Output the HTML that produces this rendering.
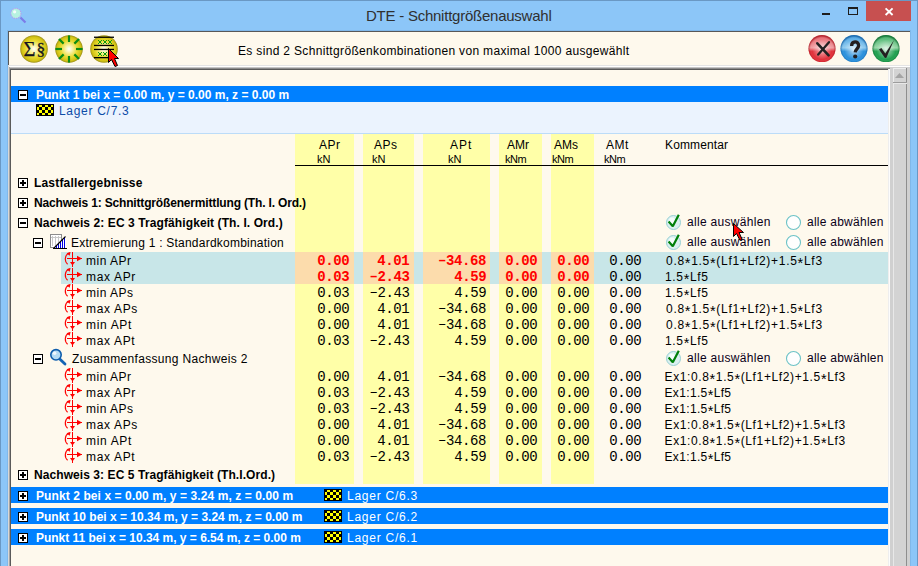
<!DOCTYPE html>
<html><head><meta charset="utf-8"><title>DTE - Schnittgrößenauswahl</title><style>
html,body{margin:0;padding:0;width:918px;height:566px;overflow:hidden;background:#8cc6f8}
.r{position:absolute;display:block}
.t{position:absolute;white-space:pre;line-height:1}
.a{position:relative;top:2.5px;font-size:14.5px}
.d{position:relative;top:-1.5px}
</style></head><body>
<div class="r" style="left:0px;top:0px;width:918px;height:566px;background:#8cc6f8;"></div>
<div class="r" style="left:0px;top:0px;width:918px;height:1px;background:#6a98c4;"></div>
<div class="r" style="left:0px;top:0px;width:1px;height:566px;background:#6a98c4;"></div>
<div class="r" style="left:917px;top:0px;width:1px;height:566px;background:#6a98c4;"></div>
<div class="t" style="left:366.00px;top:8.00px;font-family:'Liberation Sans';font-size:15px;font-weight:normal;color:#303030;letter-spacing:-0.240px">DTE - Schnittgrößenauswahl</div>
<div class="r" style="left:866px;top:1px;width:45px;height:20px;background:#c75050;"></div>
<svg class="r" style="left:866px;top:1px;" width="45" height="20" viewBox="0 0 45 20"><path d="M19.6 7.4 L26.6 14 M26.6 7.4 L19.6 14" stroke="#fff" stroke-width="1.9"/></svg>
<svg class="r" style="left:840px;top:1px;" width="26" height="20" viewBox="0 0 26 20"><g shape-rendering="crispEdges"><rect x="8" y="6" width="10" height="2" fill="#1e1e1e"/><rect x="8" y="6" width="1" height="8" fill="#1e1e1e"/><rect x="17" y="6" width="1" height="8" fill="#1e1e1e"/><rect x="8" y="13" width="10" height="1" fill="#1e1e1e"/></g></svg>
<svg class="r" style="left:815px;top:1px;" width="26" height="20" viewBox="0 0 26 20"><rect x="7" y="12" width="8" height="2" fill="#1e1e1e" shape-rendering="crispEdges"/></svg>
<svg class="r" style="left:8px;top:6px;" width="20" height="20" viewBox="0 0 20 20"><line x1="12.5" y1="11.5" x2="17.5" y2="16.5" stroke="#7c7ce8" stroke-width="2.2"/><circle cx="7.9" cy="7.4" r="5.1" fill="#b6f2e0" stroke="#b49cf0" stroke-width="1.1" stroke-dasharray="1.3 0.9"/><circle cx="6.6" cy="5.8" r="1.6" fill="#fff" opacity="0.85"/></svg>
<div class="r" style="left:7px;top:30px;width:904px;height:536px;background:#80b8ea;"></div>
<div class="r" style="left:8px;top:31px;width:902px;height:535px;background:#fef9ed;"></div>
<div class="r" style="left:8px;top:31px;width:902px;height:1px;background:#585858;"></div>
<div class="r" style="left:8px;top:31px;width:1px;height:35px;background:#585858;"></div>
<div class="r" style="left:8px;top:65px;width:902px;height:1px;background:#e4e4e4;"></div>
<div class="r" style="left:8px;top:66px;width:902px;height:1px;background:#ffffff;"></div>
<div class="r" style="left:8px;top:67px;width:902px;height:1px;background:#c4c4c4;"></div>
<div class="r" style="left:8px;top:68px;width:902px;height:1px;background:#8c8c8c;"></div>
<div class="r" style="left:8px;top:66px;width:1px;height:500px;background:#d8d8d8;"></div>
<div class="r" style="left:9px;top:67px;width:1px;height:499px;background:#a4a4a4;"></div>
<div class="r" style="left:10px;top:69px;width:878px;height:1px;background:#5a5a5a;"></div>
<div class="r" style="left:10px;top:69px;width:1px;height:497px;background:#5a5a5a;"></div>
<div class="t" style="left:238.00px;top:45.00px;font-family:'Liberation Sans';font-size:12px;font-weight:normal;color:#000;letter-spacing:0.333px">Es sind 2 Schnittgrößenkombinationen von maximal 1000 ausgewählt</div>
<div class="r" style="left:888px;top:69px;width:1px;height:497px;background:#eeeeee;"></div>
<div class="r" style="left:889px;top:69px;width:1px;height:497px;background:#fcfcfc;"></div>
<div class="r" style="left:890px;top:67px;width:20px;height:499px;background:#d0d0d0;"></div>
<div class="r" style="left:893px;top:68px;width:1px;height:498px;background:#e8e8e8;"></div>
<div class="r" style="left:894px;top:68px;width:12px;height:498px;background:#d3d3d3;"></div>
<div class="r" style="left:906px;top:68px;width:1px;height:498px;background:#8e8e8e;"></div>
<svg class="r" style="left:893px;top:68px;" width="14" height="16" viewBox="0 0 14 16"><g shape-rendering="crispEdges"><rect x="0" y="0" width="14" height="16" fill="#d3d3d3"/><rect x="0" y="0" width="1" height="15" fill="#ececec"/><rect x="0" y="0" width="13" height="1" fill="#ececec"/><rect x="13" y="0" width="1" height="16" fill="#8e8e8e"/><rect x="0" y="14" width="14" height="1" fill="#9c9c9c"/><rect x="0" y="15" width="14" height="1" fill="#e8e8e8"/></g><path d="M2 10 L6.5 5 L11 10 Z" fill="#a4a4a4"/></svg>
<div class="r" style="left:11px;top:86px;width:877px;height:16px;background:#0080ff;"></div>
<div class="r" style="left:11px;top:102px;width:877px;height:31px;background:#ebf3fe;"></div>
<div class="r" style="left:11px;top:133px;width:877px;height:1px;background:#bcdcf8;"></div>
<svg class="r" style="left:18px;top:90px;" width="10" height="10" viewBox="0 0 10 10"><g shape-rendering="crispEdges"><rect x="0" y="0" width="10" height="10" fill="#000"/><rect x="1" y="1" width="8" height="8" fill="#fff"/><rect x="2" y="4" width="6" height="2" fill="#000"/></g></svg>
<div class="t" style="left:36.00px;top:89.00px;font-family:'Liberation Sans';font-size:12px;font-weight:bold;color:#fff;letter-spacing:0.000px">Punkt 1 bei x = 0.00 m, y = 0.00 m, z = 0.00 m</div>
<svg class="r" style="left:36px;top:104px;" width="18" height="12" viewBox="0 0 18 12"><g shape-rendering="crispEdges"><rect width="18" height="12" fill="#000"/><rect x="3" y="1" width="3" height="2" fill="#ffff00"/><rect x="9" y="1" width="3" height="2" fill="#ffff00"/><rect x="15" y="1" width="2" height="2" fill="#ffff00"/><rect x="1" y="3" width="2" height="3" fill="#ffff00"/><rect x="6" y="3" width="3" height="3" fill="#ffff00"/><rect x="12" y="3" width="3" height="3" fill="#ffff00"/><rect x="3" y="6" width="3" height="3" fill="#ffff00"/><rect x="9" y="6" width="3" height="3" fill="#ffff00"/><rect x="15" y="6" width="2" height="3" fill="#ffff00"/><rect x="1" y="9" width="2" height="2" fill="#ffff00"/><rect x="6" y="9" width="3" height="2" fill="#ffff00"/><rect x="12" y="9" width="3" height="2" fill="#ffff00"/></g></svg>
<div class="t" style="left:59.00px;top:105.00px;font-family:'Liberation Sans';font-size:12px;font-weight:normal;color:#0c4ca8;letter-spacing:0.700px">Lager C/7.3</div>
<div class="r" style="left:295px;top:134px;width:59px;height:350px;background:#ffffa8;"></div>
<div class="r" style="left:363px;top:134px;width:51px;height:350px;background:#ffffa8;"></div>
<div class="r" style="left:423px;top:134px;width:67px;height:350px;background:#ffffa8;"></div>
<div class="r" style="left:499px;top:134px;width:43px;height:350px;background:#ffffa8;"></div>
<div class="r" style="left:551px;top:134px;width:43px;height:350px;background:#ffffa8;"></div>
<div class="t" style="left:319.00px;top:139.00px;font-family:'Liberation Sans';font-size:12px;font-weight:normal;color:#000;letter-spacing:0.500px">APr</div>
<div class="t" style="left:317.00px;top:154.00px;font-family:'Liberation Sans';font-size:11px;font-weight:normal;color:#000;letter-spacing:0.000px">kN</div>
<div class="t" style="left:374.00px;top:139.00px;font-family:'Liberation Sans';font-size:12px;font-weight:normal;color:#000;letter-spacing:0.500px">APs</div>
<div class="t" style="left:372.00px;top:154.00px;font-family:'Liberation Sans';font-size:11px;font-weight:normal;color:#000;letter-spacing:0.000px">kN</div>
<div class="t" style="left:450.00px;top:139.00px;font-family:'Liberation Sans';font-size:12px;font-weight:normal;color:#000;letter-spacing:1.000px">APt</div>
<div class="t" style="left:448.00px;top:154.00px;font-family:'Liberation Sans';font-size:11px;font-weight:normal;color:#000;letter-spacing:0.000px">kN</div>
<div class="t" style="left:507.00px;top:139.00px;font-family:'Liberation Sans';font-size:12px;font-weight:normal;color:#000;letter-spacing:0.000px">AMr</div>
<div class="t" style="left:505.00px;top:154.00px;font-family:'Liberation Sans';font-size:11px;font-weight:normal;color:#000;letter-spacing:-0.500px">kNm</div>
<div class="t" style="left:554.00px;top:139.00px;font-family:'Liberation Sans';font-size:12px;font-weight:normal;color:#000;letter-spacing:0.000px">AMs</div>
<div class="t" style="left:552.00px;top:154.00px;font-family:'Liberation Sans';font-size:11px;font-weight:normal;color:#000;letter-spacing:-0.500px">kNm</div>
<div class="t" style="left:606.00px;top:139.00px;font-family:'Liberation Sans';font-size:12px;font-weight:normal;color:#000;letter-spacing:0.500px">AMt</div>
<div class="t" style="left:604.00px;top:154.00px;font-family:'Liberation Sans';font-size:11px;font-weight:normal;color:#000;letter-spacing:-0.500px">kNm</div>
<div class="t" style="left:665.00px;top:139.00px;font-family:'Liberation Sans';font-size:12px;font-weight:normal;color:#000;letter-spacing:0.125px">Kommentar</div>
<div class="r" style="left:295px;top:165px;width:593px;height:1px;background:#000;"></div>
<svg class="r" style="left:18px;top:178px;" width="10" height="10" viewBox="0 0 10 10"><g shape-rendering="crispEdges"><rect x="0" y="0" width="10" height="10" fill="#000"/><rect x="1" y="1" width="8" height="8" fill="#fff"/><rect x="2" y="4" width="6" height="2" fill="#000"/><rect x="4" y="2" width="2" height="6" fill="#000"/></g></svg>
<div class="t" style="left:34.00px;top:177.00px;font-family:'Liberation Sans';font-size:12px;font-weight:bold;color:#000;letter-spacing:0.176px">Lastfallergebnisse</div>
<svg class="r" style="left:18px;top:198px;" width="10" height="10" viewBox="0 0 10 10"><g shape-rendering="crispEdges"><rect x="0" y="0" width="10" height="10" fill="#000"/><rect x="1" y="1" width="8" height="8" fill="#fff"/><rect x="2" y="4" width="6" height="2" fill="#000"/><rect x="4" y="2" width="2" height="6" fill="#000"/></g></svg>
<div class="t" style="left:34.00px;top:197.00px;font-family:'Liberation Sans';font-size:12px;font-weight:bold;color:#000;letter-spacing:-0.167px">Nachweis 1: Schnittgrößenermittlung (Th. I. Ord.)</div>
<svg class="r" style="left:18px;top:218px;" width="10" height="10" viewBox="0 0 10 10"><g shape-rendering="crispEdges"><rect x="0" y="0" width="10" height="10" fill="#000"/><rect x="1" y="1" width="8" height="8" fill="#fff"/><rect x="2" y="4" width="6" height="2" fill="#000"/></g></svg>
<div class="t" style="left:34.00px;top:217.00px;font-family:'Liberation Sans';font-size:12px;font-weight:bold;color:#000;letter-spacing:0.093px">Nachweis 2: EC 3 Tragfähigkeit (Th. I. Ord.)</div>
<svg class="r" style="left:33px;top:238px;" width="10" height="10" viewBox="0 0 10 10"><g shape-rendering="crispEdges"><rect x="0" y="0" width="10" height="10" fill="#000"/><rect x="1" y="1" width="8" height="8" fill="#fff"/><rect x="2" y="4" width="6" height="2" fill="#000"/></g></svg>
<svg class="r" style="left:50px;top:234px;" width="17" height="15" viewBox="0 0 17 15"><g shape-rendering="crispEdges"><rect x="0" y="0" width="12" height="14" fill="#8c8c8c"/><rect x="1" y="1" width="10" height="12" fill="#fff"/><rect x="1" y="3" width="10" height="1" fill="#c8c8c8"/><rect x="2" y="2" width="1" height="10" fill="#c8c8c8"/><rect x="5" y="2" width="1" height="10" fill="#c8c8c8"/><rect x="8" y="2" width="1" height="10" fill="#c8c8c8"/></g><path d="M4 14 L16 2 L16 14 Z" fill="#fff"/><g stroke="#0000e0" stroke-width="1" shape-rendering="crispEdges"><line x1="6.5" y1="12" x2="6.5" y2="14"/><line x1="8.5" y1="10" x2="8.5" y2="14"/><line x1="10.5" y1="8" x2="10.5" y2="14"/><line x1="12.5" y1="6" x2="12.5" y2="14"/><line x1="14.5" y1="4" x2="14.5" y2="14"/></g><line x1="3.5" y1="14.5" x2="15.5" y2="2.5" stroke="#000" stroke-width="1.1"/><rect x="3" y="14" width="14" height="1" fill="#000"/></svg>
<div class="t" style="left:71.00px;top:237.00px;font-family:'Liberation Sans';font-size:12px;font-weight:normal;color:#000;letter-spacing:0.229px">Extremierung 1 : Standardkombination</div>
<div class="r" style="left:61px;top:252px;width:827px;height:32px;background:#c8e6e8;"></div>
<div class="r" style="left:295px;top:252px;width:59px;height:32px;background:#fcdcac;"></div>
<div class="r" style="left:363px;top:252px;width:51px;height:32px;background:#fcdcac;"></div>
<div class="r" style="left:423px;top:252px;width:67px;height:32px;background:#fcdcac;"></div>
<div class="r" style="left:499px;top:252px;width:43px;height:32px;background:#fcdcac;"></div>
<div class="r" style="left:551px;top:252px;width:43px;height:32px;background:#fcdcac;"></div>
<svg class="r" style="left:61px;top:252px;" width="22" height="16" viewBox="0 0 22 16"><g shape-rendering="crispEdges" fill="#ff0000"><rect x="11" y="0" width="1" height="15"/><rect x="6" y="6" width="15" height="1"/></g><path d="M9 10 L14 10 L11.5 13.6 Z" fill="#f00"/><path d="M16 3.8 L21 6.5 L16 9.2 Z" fill="#f00"/><path d="M7.6 1.2 A5.6 6.4 0 0 0 6.6 12.2" stroke="#f00" stroke-width="1.15" fill="none"/><path d="M5.6 1.2 L9.6 -0.2 L8.6 3.8 Z" fill="#f00"/></svg>
<div class="t" style="left:86.00px;top:255.00px;font-family:'Liberation Sans';font-size:12px;font-weight:normal;color:#000;letter-spacing:0.500px">min APr</div>
<div class="t" style="left:317.20px;top:254.00px;font-family:'Liberation Mono';font-size:14px;font-weight:bold;color:#ff0000;letter-spacing:-0.400px">0.00</div>
<div class="t" style="left:377.20px;top:254.00px;font-family:'Liberation Mono';font-size:14px;font-weight:bold;color:#ff0000;letter-spacing:-0.400px">4.01</div>
<div class="t" style="left:438.00px;top:254.00px;font-family:'Liberation Mono';font-size:14px;font-weight:bold;color:#ff0000;letter-spacing:-0.400px"><span class="d">–</span>34.68</div>
<div class="t" style="left:505.20px;top:254.00px;font-family:'Liberation Mono';font-size:14px;font-weight:bold;color:#ff0000;letter-spacing:-0.400px">0.00</div>
<div class="t" style="left:557.20px;top:254.00px;font-family:'Liberation Mono';font-size:14px;font-weight:bold;color:#ff0000;letter-spacing:-0.400px">0.00</div>
<div class="t" style="left:609.20px;top:254.00px;font-family:'Liberation Mono';font-size:14px;font-weight:normal;color:#000;letter-spacing:-0.400px">0.00</div>
<div class="t" style="left:666.00px;top:253.00px;font-family:'Liberation Sans';font-size:12px;font-weight:normal;color:#000;letter-spacing:0.708px">0.8<span class="a">*</span>1.5<span class="a">*</span>(Lf1+Lf2)+1.5<span class="a">*</span>Lf3</div>
<svg class="r" style="left:61px;top:268px;" width="22" height="16" viewBox="0 0 22 16"><g shape-rendering="crispEdges" fill="#ff0000"><rect x="11" y="0" width="1" height="15"/><rect x="6" y="6" width="15" height="1"/></g><path d="M9 10 L14 10 L11.5 13.6 Z" fill="#f00"/><path d="M16 3.8 L21 6.5 L16 9.2 Z" fill="#f00"/><path d="M7.6 1.2 A5.6 6.4 0 0 0 6.6 12.2" stroke="#f00" stroke-width="1.15" fill="none"/><path d="M5.6 1.2 L9.6 -0.2 L8.6 3.8 Z" fill="#f00"/></svg>
<div class="t" style="left:86.00px;top:271.00px;font-family:'Liberation Sans';font-size:12px;font-weight:normal;color:#000;letter-spacing:0.667px">max APr</div>
<div class="t" style="left:317.20px;top:270.00px;font-family:'Liberation Mono';font-size:14px;font-weight:bold;color:#ff0000;letter-spacing:-0.400px">0.03</div>
<div class="t" style="left:369.60px;top:270.00px;font-family:'Liberation Mono';font-size:14px;font-weight:bold;color:#ff0000;letter-spacing:-0.400px"><span class="d">–</span>2.43</div>
<div class="t" style="left:454.20px;top:270.00px;font-family:'Liberation Mono';font-size:14px;font-weight:bold;color:#ff0000;letter-spacing:-0.400px">4.59</div>
<div class="t" style="left:505.20px;top:270.00px;font-family:'Liberation Mono';font-size:14px;font-weight:bold;color:#ff0000;letter-spacing:-0.400px">0.00</div>
<div class="t" style="left:557.20px;top:270.00px;font-family:'Liberation Mono';font-size:14px;font-weight:bold;color:#ff0000;letter-spacing:-0.400px">0.00</div>
<div class="t" style="left:609.20px;top:270.00px;font-family:'Liberation Mono';font-size:14px;font-weight:normal;color:#000;letter-spacing:-0.400px">0.00</div>
<div class="t" style="left:665.00px;top:269.00px;font-family:'Liberation Sans';font-size:12px;font-weight:normal;color:#000;letter-spacing:0.667px">1.5<span class="a">*</span>Lf5</div>
<svg class="r" style="left:61px;top:284px;" width="22" height="16" viewBox="0 0 22 16"><g shape-rendering="crispEdges" fill="#ff0000"><rect x="11" y="0" width="1" height="15"/><rect x="6" y="6" width="15" height="1"/></g><path d="M9 10 L14 10 L11.5 13.6 Z" fill="#f00"/><path d="M16 3.8 L21 6.5 L16 9.2 Z" fill="#f00"/><path d="M7.6 1.2 A5.6 6.4 0 0 0 6.6 12.2" stroke="#f00" stroke-width="1.15" fill="none"/><path d="M5.6 1.2 L9.6 -0.2 L8.6 3.8 Z" fill="#f00"/></svg>
<div class="t" style="left:86.00px;top:287.00px;font-family:'Liberation Sans';font-size:12px;font-weight:normal;color:#000;letter-spacing:0.500px">min APs</div>
<div class="t" style="left:317.20px;top:286.00px;font-family:'Liberation Mono';font-size:14px;font-weight:normal;color:#000;letter-spacing:-0.400px">0.03</div>
<div class="t" style="left:369.60px;top:286.00px;font-family:'Liberation Mono';font-size:14px;font-weight:normal;color:#000;letter-spacing:-0.400px"><span class="d">–</span>2.43</div>
<div class="t" style="left:454.20px;top:286.00px;font-family:'Liberation Mono';font-size:14px;font-weight:normal;color:#000;letter-spacing:-0.400px">4.59</div>
<div class="t" style="left:505.20px;top:286.00px;font-family:'Liberation Mono';font-size:14px;font-weight:normal;color:#000;letter-spacing:-0.400px">0.00</div>
<div class="t" style="left:557.20px;top:286.00px;font-family:'Liberation Mono';font-size:14px;font-weight:normal;color:#000;letter-spacing:-0.400px">0.00</div>
<div class="t" style="left:609.20px;top:286.00px;font-family:'Liberation Mono';font-size:14px;font-weight:normal;color:#000;letter-spacing:-0.400px">0.00</div>
<div class="t" style="left:665.00px;top:285.00px;font-family:'Liberation Sans';font-size:12px;font-weight:normal;color:#000;letter-spacing:0.667px">1.5<span class="a">*</span>Lf5</div>
<svg class="r" style="left:61px;top:300px;" width="22" height="16" viewBox="0 0 22 16"><g shape-rendering="crispEdges" fill="#ff0000"><rect x="11" y="0" width="1" height="15"/><rect x="6" y="6" width="15" height="1"/></g><path d="M9 10 L14 10 L11.5 13.6 Z" fill="#f00"/><path d="M16 3.8 L21 6.5 L16 9.2 Z" fill="#f00"/><path d="M7.6 1.2 A5.6 6.4 0 0 0 6.6 12.2" stroke="#f00" stroke-width="1.15" fill="none"/><path d="M5.6 1.2 L9.6 -0.2 L8.6 3.8 Z" fill="#f00"/></svg>
<div class="t" style="left:86.00px;top:303.00px;font-family:'Liberation Sans';font-size:12px;font-weight:normal;color:#000;letter-spacing:0.667px">max APs</div>
<div class="t" style="left:317.20px;top:302.00px;font-family:'Liberation Mono';font-size:14px;font-weight:normal;color:#000;letter-spacing:-0.400px">0.00</div>
<div class="t" style="left:377.20px;top:302.00px;font-family:'Liberation Mono';font-size:14px;font-weight:normal;color:#000;letter-spacing:-0.400px">4.01</div>
<div class="t" style="left:438.00px;top:302.00px;font-family:'Liberation Mono';font-size:14px;font-weight:normal;color:#000;letter-spacing:-0.400px"><span class="d">–</span>34.68</div>
<div class="t" style="left:505.20px;top:302.00px;font-family:'Liberation Mono';font-size:14px;font-weight:normal;color:#000;letter-spacing:-0.400px">0.00</div>
<div class="t" style="left:557.20px;top:302.00px;font-family:'Liberation Mono';font-size:14px;font-weight:normal;color:#000;letter-spacing:-0.400px">0.00</div>
<div class="t" style="left:609.20px;top:302.00px;font-family:'Liberation Mono';font-size:14px;font-weight:normal;color:#000;letter-spacing:-0.400px">0.00</div>
<div class="t" style="left:666.00px;top:301.00px;font-family:'Liberation Sans';font-size:12px;font-weight:normal;color:#000;letter-spacing:0.708px">0.8<span class="a">*</span>1.5<span class="a">*</span>(Lf1+Lf2)+1.5<span class="a">*</span>Lf3</div>
<svg class="r" style="left:61px;top:316px;" width="22" height="16" viewBox="0 0 22 16"><g shape-rendering="crispEdges" fill="#ff0000"><rect x="11" y="0" width="1" height="15"/><rect x="6" y="6" width="15" height="1"/></g><path d="M9 10 L14 10 L11.5 13.6 Z" fill="#f00"/><path d="M16 3.8 L21 6.5 L16 9.2 Z" fill="#f00"/><path d="M7.6 1.2 A5.6 6.4 0 0 0 6.6 12.2" stroke="#f00" stroke-width="1.15" fill="none"/><path d="M5.6 1.2 L9.6 -0.2 L8.6 3.8 Z" fill="#f00"/></svg>
<div class="t" style="left:86.00px;top:319.00px;font-family:'Liberation Sans';font-size:12px;font-weight:normal;color:#000;letter-spacing:0.667px">min APt</div>
<div class="t" style="left:317.20px;top:318.00px;font-family:'Liberation Mono';font-size:14px;font-weight:normal;color:#000;letter-spacing:-0.400px">0.00</div>
<div class="t" style="left:377.20px;top:318.00px;font-family:'Liberation Mono';font-size:14px;font-weight:normal;color:#000;letter-spacing:-0.400px">4.01</div>
<div class="t" style="left:438.00px;top:318.00px;font-family:'Liberation Mono';font-size:14px;font-weight:normal;color:#000;letter-spacing:-0.400px"><span class="d">–</span>34.68</div>
<div class="t" style="left:505.20px;top:318.00px;font-family:'Liberation Mono';font-size:14px;font-weight:normal;color:#000;letter-spacing:-0.400px">0.00</div>
<div class="t" style="left:557.20px;top:318.00px;font-family:'Liberation Mono';font-size:14px;font-weight:normal;color:#000;letter-spacing:-0.400px">0.00</div>
<div class="t" style="left:609.20px;top:318.00px;font-family:'Liberation Mono';font-size:14px;font-weight:normal;color:#000;letter-spacing:-0.400px">0.00</div>
<div class="t" style="left:666.00px;top:317.00px;font-family:'Liberation Sans';font-size:12px;font-weight:normal;color:#000;letter-spacing:0.708px">0.8<span class="a">*</span>1.5<span class="a">*</span>(Lf1+Lf2)+1.5<span class="a">*</span>Lf3</div>
<svg class="r" style="left:61px;top:332px;" width="22" height="16" viewBox="0 0 22 16"><g shape-rendering="crispEdges" fill="#ff0000"><rect x="11" y="0" width="1" height="15"/><rect x="6" y="6" width="15" height="1"/></g><path d="M9 10 L14 10 L11.5 13.6 Z" fill="#f00"/><path d="M16 3.8 L21 6.5 L16 9.2 Z" fill="#f00"/><path d="M7.6 1.2 A5.6 6.4 0 0 0 6.6 12.2" stroke="#f00" stroke-width="1.15" fill="none"/><path d="M5.6 1.2 L9.6 -0.2 L8.6 3.8 Z" fill="#f00"/></svg>
<div class="t" style="left:86.00px;top:335.00px;font-family:'Liberation Sans';font-size:12px;font-weight:normal;color:#000;letter-spacing:0.667px">max APt</div>
<div class="t" style="left:317.20px;top:334.00px;font-family:'Liberation Mono';font-size:14px;font-weight:normal;color:#000;letter-spacing:-0.400px">0.03</div>
<div class="t" style="left:369.60px;top:334.00px;font-family:'Liberation Mono';font-size:14px;font-weight:normal;color:#000;letter-spacing:-0.400px"><span class="d">–</span>2.43</div>
<div class="t" style="left:454.20px;top:334.00px;font-family:'Liberation Mono';font-size:14px;font-weight:normal;color:#000;letter-spacing:-0.400px">4.59</div>
<div class="t" style="left:505.20px;top:334.00px;font-family:'Liberation Mono';font-size:14px;font-weight:normal;color:#000;letter-spacing:-0.400px">0.00</div>
<div class="t" style="left:557.20px;top:334.00px;font-family:'Liberation Mono';font-size:14px;font-weight:normal;color:#000;letter-spacing:-0.400px">0.00</div>
<div class="t" style="left:609.20px;top:334.00px;font-family:'Liberation Mono';font-size:14px;font-weight:normal;color:#000;letter-spacing:-0.400px">0.00</div>
<div class="t" style="left:665.00px;top:333.00px;font-family:'Liberation Sans';font-size:12px;font-weight:normal;color:#000;letter-spacing:0.667px">1.5<span class="a">*</span>Lf5</div>
<svg class="r" style="left:665px;top:214px;" width="18" height="17" viewBox="0 0 18 17"><circle cx="8.5" cy="8.5" r="7" fill="#daf0f0" stroke="#98d0d4" stroke-width="1"/><circle cx="7" cy="6.5" r="3" fill="#f4fcfc"/><path d="M3.6 7.6 L7.8 12.3 L13.8 0.8" stroke="#00800a" stroke-width="2.2" fill="none" stroke-linejoin="bevel"/></svg>
<div class="t" style="left:687.00px;top:216.00px;font-family:'Liberation Sans';font-size:12px;font-weight:normal;color:#0a0018;letter-spacing:0.308px">alle auswählen</div>
<svg class="r" style="left:785px;top:214px;" width="17" height="17" viewBox="0 0 17 17"><circle cx="8.5" cy="8.5" r="7" fill="#fefefe" stroke="#6cc2c6" stroke-width="1.1"/></svg>
<div class="t" style="left:807.00px;top:216.00px;font-family:'Liberation Sans';font-size:12px;font-weight:normal;color:#0a0018;letter-spacing:0.250px">alle abwählen</div>
<svg class="r" style="left:665px;top:234px;" width="18" height="17" viewBox="0 0 18 17"><circle cx="8.5" cy="8.5" r="7" fill="#daf0f0" stroke="#98d0d4" stroke-width="1"/><circle cx="7" cy="6.5" r="3" fill="#f4fcfc"/><path d="M3.6 7.6 L7.8 12.3 L13.8 0.8" stroke="#00800a" stroke-width="2.2" fill="none" stroke-linejoin="bevel"/></svg>
<div class="t" style="left:687.00px;top:236.00px;font-family:'Liberation Sans';font-size:12px;font-weight:normal;color:#0a0018;letter-spacing:0.308px">alle auswählen</div>
<svg class="r" style="left:785px;top:234px;" width="17" height="17" viewBox="0 0 17 17"><circle cx="8.5" cy="8.5" r="7" fill="#fefefe" stroke="#6cc2c6" stroke-width="1.1"/></svg>
<div class="t" style="left:807.00px;top:236.00px;font-family:'Liberation Sans';font-size:12px;font-weight:normal;color:#0a0018;letter-spacing:0.250px">alle abwählen</div>
<svg class="r" style="left:33px;top:354px;" width="10" height="10" viewBox="0 0 10 10"><g shape-rendering="crispEdges"><rect x="0" y="0" width="10" height="10" fill="#000"/><rect x="1" y="1" width="8" height="8" fill="#fff"/><rect x="2" y="4" width="6" height="2" fill="#000"/></g></svg>
<svg class="r" style="left:49px;top:348px;" width="18" height="18" viewBox="0 0 18 18"><line x1="11" y1="11.2" x2="16" y2="16" stroke="#1464b4" stroke-width="2.8" stroke-linecap="round"/><circle cx="7" cy="6.8" r="5.2" fill="#b4dcf4" stroke="#0c5cac" stroke-width="1.6"/><circle cx="5.6" cy="5.2" r="1.8" fill="#fff" opacity="0.8"/></svg>
<div class="t" style="left:72.00px;top:353.00px;font-family:'Liberation Sans';font-size:12px;font-weight:normal;color:#000;letter-spacing:0.320px">Zusammenfassung Nachweis 2</div>
<svg class="r" style="left:665px;top:350px;" width="18" height="17" viewBox="0 0 18 17"><circle cx="8.5" cy="8.5" r="7" fill="#daf0f0" stroke="#98d0d4" stroke-width="1"/><circle cx="7" cy="6.5" r="3" fill="#f4fcfc"/><path d="M3.6 7.6 L7.8 12.3 L13.8 0.8" stroke="#00800a" stroke-width="2.2" fill="none" stroke-linejoin="bevel"/></svg>
<div class="t" style="left:687.00px;top:352.00px;font-family:'Liberation Sans';font-size:12px;font-weight:normal;color:#0a0018;letter-spacing:0.308px">alle auswählen</div>
<svg class="r" style="left:785px;top:350px;" width="17" height="17" viewBox="0 0 17 17"><circle cx="8.5" cy="8.5" r="7" fill="#fefefe" stroke="#6cc2c6" stroke-width="1.1"/></svg>
<div class="t" style="left:807.00px;top:352.00px;font-family:'Liberation Sans';font-size:12px;font-weight:normal;color:#0a0018;letter-spacing:0.250px">alle abwählen</div>
<svg class="r" style="left:61px;top:368px;" width="22" height="16" viewBox="0 0 22 16"><g shape-rendering="crispEdges" fill="#ff0000"><rect x="11" y="0" width="1" height="15"/><rect x="6" y="6" width="15" height="1"/></g><path d="M9 10 L14 10 L11.5 13.6 Z" fill="#f00"/><path d="M16 3.8 L21 6.5 L16 9.2 Z" fill="#f00"/><path d="M7.6 1.2 A5.6 6.4 0 0 0 6.6 12.2" stroke="#f00" stroke-width="1.15" fill="none"/><path d="M5.6 1.2 L9.6 -0.2 L8.6 3.8 Z" fill="#f00"/></svg>
<div class="t" style="left:86.00px;top:371.00px;font-family:'Liberation Sans';font-size:12px;font-weight:normal;color:#000;letter-spacing:0.500px">min APr</div>
<div class="t" style="left:317.20px;top:370.00px;font-family:'Liberation Mono';font-size:14px;font-weight:normal;color:#000;letter-spacing:-0.400px">0.00</div>
<div class="t" style="left:377.20px;top:370.00px;font-family:'Liberation Mono';font-size:14px;font-weight:normal;color:#000;letter-spacing:-0.400px">4.01</div>
<div class="t" style="left:438.00px;top:370.00px;font-family:'Liberation Mono';font-size:14px;font-weight:normal;color:#000;letter-spacing:-0.400px"><span class="d">–</span>34.68</div>
<div class="t" style="left:505.20px;top:370.00px;font-family:'Liberation Mono';font-size:14px;font-weight:normal;color:#000;letter-spacing:-0.400px">0.00</div>
<div class="t" style="left:557.20px;top:370.00px;font-family:'Liberation Mono';font-size:14px;font-weight:normal;color:#000;letter-spacing:-0.400px">0.00</div>
<div class="t" style="left:609.20px;top:370.00px;font-family:'Liberation Mono';font-size:14px;font-weight:normal;color:#000;letter-spacing:-0.400px">0.00</div>
<div class="t" style="left:664.50px;top:369.00px;font-family:'Liberation Sans';font-size:12px;font-weight:normal;color:#000;letter-spacing:0.625px">Ex1:0.8<span class="a">*</span>1.5<span class="a">*</span>(Lf1+Lf2)+1.5<span class="a">*</span>Lf3</div>
<svg class="r" style="left:61px;top:384px;" width="22" height="16" viewBox="0 0 22 16"><g shape-rendering="crispEdges" fill="#ff0000"><rect x="11" y="0" width="1" height="15"/><rect x="6" y="6" width="15" height="1"/></g><path d="M9 10 L14 10 L11.5 13.6 Z" fill="#f00"/><path d="M16 3.8 L21 6.5 L16 9.2 Z" fill="#f00"/><path d="M7.6 1.2 A5.6 6.4 0 0 0 6.6 12.2" stroke="#f00" stroke-width="1.15" fill="none"/><path d="M5.6 1.2 L9.6 -0.2 L8.6 3.8 Z" fill="#f00"/></svg>
<div class="t" style="left:86.00px;top:387.00px;font-family:'Liberation Sans';font-size:12px;font-weight:normal;color:#000;letter-spacing:0.667px">max APr</div>
<div class="t" style="left:317.20px;top:386.00px;font-family:'Liberation Mono';font-size:14px;font-weight:normal;color:#000;letter-spacing:-0.400px">0.03</div>
<div class="t" style="left:369.60px;top:386.00px;font-family:'Liberation Mono';font-size:14px;font-weight:normal;color:#000;letter-spacing:-0.400px"><span class="d">–</span>2.43</div>
<div class="t" style="left:454.20px;top:386.00px;font-family:'Liberation Mono';font-size:14px;font-weight:normal;color:#000;letter-spacing:-0.400px">4.59</div>
<div class="t" style="left:505.20px;top:386.00px;font-family:'Liberation Mono';font-size:14px;font-weight:normal;color:#000;letter-spacing:-0.400px">0.00</div>
<div class="t" style="left:557.20px;top:386.00px;font-family:'Liberation Mono';font-size:14px;font-weight:normal;color:#000;letter-spacing:-0.400px">0.00</div>
<div class="t" style="left:609.20px;top:386.00px;font-family:'Liberation Mono';font-size:14px;font-weight:normal;color:#000;letter-spacing:-0.400px">0.00</div>
<div class="t" style="left:664.50px;top:385.00px;font-family:'Liberation Sans';font-size:12px;font-weight:normal;color:#000;letter-spacing:0.350px">Ex1:1.5<span class="a">*</span>Lf5</div>
<svg class="r" style="left:61px;top:400px;" width="22" height="16" viewBox="0 0 22 16"><g shape-rendering="crispEdges" fill="#ff0000"><rect x="11" y="0" width="1" height="15"/><rect x="6" y="6" width="15" height="1"/></g><path d="M9 10 L14 10 L11.5 13.6 Z" fill="#f00"/><path d="M16 3.8 L21 6.5 L16 9.2 Z" fill="#f00"/><path d="M7.6 1.2 A5.6 6.4 0 0 0 6.6 12.2" stroke="#f00" stroke-width="1.15" fill="none"/><path d="M5.6 1.2 L9.6 -0.2 L8.6 3.8 Z" fill="#f00"/></svg>
<div class="t" style="left:86.00px;top:403.00px;font-family:'Liberation Sans';font-size:12px;font-weight:normal;color:#000;letter-spacing:0.500px">min APs</div>
<div class="t" style="left:317.20px;top:402.00px;font-family:'Liberation Mono';font-size:14px;font-weight:normal;color:#000;letter-spacing:-0.400px">0.03</div>
<div class="t" style="left:369.60px;top:402.00px;font-family:'Liberation Mono';font-size:14px;font-weight:normal;color:#000;letter-spacing:-0.400px"><span class="d">–</span>2.43</div>
<div class="t" style="left:454.20px;top:402.00px;font-family:'Liberation Mono';font-size:14px;font-weight:normal;color:#000;letter-spacing:-0.400px">4.59</div>
<div class="t" style="left:505.20px;top:402.00px;font-family:'Liberation Mono';font-size:14px;font-weight:normal;color:#000;letter-spacing:-0.400px">0.00</div>
<div class="t" style="left:557.20px;top:402.00px;font-family:'Liberation Mono';font-size:14px;font-weight:normal;color:#000;letter-spacing:-0.400px">0.00</div>
<div class="t" style="left:609.20px;top:402.00px;font-family:'Liberation Mono';font-size:14px;font-weight:normal;color:#000;letter-spacing:-0.400px">0.00</div>
<div class="t" style="left:664.50px;top:401.00px;font-family:'Liberation Sans';font-size:12px;font-weight:normal;color:#000;letter-spacing:0.350px">Ex1:1.5<span class="a">*</span>Lf5</div>
<svg class="r" style="left:61px;top:416px;" width="22" height="16" viewBox="0 0 22 16"><g shape-rendering="crispEdges" fill="#ff0000"><rect x="11" y="0" width="1" height="15"/><rect x="6" y="6" width="15" height="1"/></g><path d="M9 10 L14 10 L11.5 13.6 Z" fill="#f00"/><path d="M16 3.8 L21 6.5 L16 9.2 Z" fill="#f00"/><path d="M7.6 1.2 A5.6 6.4 0 0 0 6.6 12.2" stroke="#f00" stroke-width="1.15" fill="none"/><path d="M5.6 1.2 L9.6 -0.2 L8.6 3.8 Z" fill="#f00"/></svg>
<div class="t" style="left:86.00px;top:419.00px;font-family:'Liberation Sans';font-size:12px;font-weight:normal;color:#000;letter-spacing:0.667px">max APs</div>
<div class="t" style="left:317.20px;top:418.00px;font-family:'Liberation Mono';font-size:14px;font-weight:normal;color:#000;letter-spacing:-0.400px">0.00</div>
<div class="t" style="left:377.20px;top:418.00px;font-family:'Liberation Mono';font-size:14px;font-weight:normal;color:#000;letter-spacing:-0.400px">4.01</div>
<div class="t" style="left:438.00px;top:418.00px;font-family:'Liberation Mono';font-size:14px;font-weight:normal;color:#000;letter-spacing:-0.400px"><span class="d">–</span>34.68</div>
<div class="t" style="left:505.20px;top:418.00px;font-family:'Liberation Mono';font-size:14px;font-weight:normal;color:#000;letter-spacing:-0.400px">0.00</div>
<div class="t" style="left:557.20px;top:418.00px;font-family:'Liberation Mono';font-size:14px;font-weight:normal;color:#000;letter-spacing:-0.400px">0.00</div>
<div class="t" style="left:609.20px;top:418.00px;font-family:'Liberation Mono';font-size:14px;font-weight:normal;color:#000;letter-spacing:-0.400px">0.00</div>
<div class="t" style="left:664.50px;top:417.00px;font-family:'Liberation Sans';font-size:12px;font-weight:normal;color:#000;letter-spacing:0.625px">Ex1:0.8<span class="a">*</span>1.5<span class="a">*</span>(Lf1+Lf2)+1.5<span class="a">*</span>Lf3</div>
<svg class="r" style="left:61px;top:432px;" width="22" height="16" viewBox="0 0 22 16"><g shape-rendering="crispEdges" fill="#ff0000"><rect x="11" y="0" width="1" height="15"/><rect x="6" y="6" width="15" height="1"/></g><path d="M9 10 L14 10 L11.5 13.6 Z" fill="#f00"/><path d="M16 3.8 L21 6.5 L16 9.2 Z" fill="#f00"/><path d="M7.6 1.2 A5.6 6.4 0 0 0 6.6 12.2" stroke="#f00" stroke-width="1.15" fill="none"/><path d="M5.6 1.2 L9.6 -0.2 L8.6 3.8 Z" fill="#f00"/></svg>
<div class="t" style="left:86.00px;top:435.00px;font-family:'Liberation Sans';font-size:12px;font-weight:normal;color:#000;letter-spacing:0.667px">min APt</div>
<div class="t" style="left:317.20px;top:434.00px;font-family:'Liberation Mono';font-size:14px;font-weight:normal;color:#000;letter-spacing:-0.400px">0.00</div>
<div class="t" style="left:377.20px;top:434.00px;font-family:'Liberation Mono';font-size:14px;font-weight:normal;color:#000;letter-spacing:-0.400px">4.01</div>
<div class="t" style="left:438.00px;top:434.00px;font-family:'Liberation Mono';font-size:14px;font-weight:normal;color:#000;letter-spacing:-0.400px"><span class="d">–</span>34.68</div>
<div class="t" style="left:505.20px;top:434.00px;font-family:'Liberation Mono';font-size:14px;font-weight:normal;color:#000;letter-spacing:-0.400px">0.00</div>
<div class="t" style="left:557.20px;top:434.00px;font-family:'Liberation Mono';font-size:14px;font-weight:normal;color:#000;letter-spacing:-0.400px">0.00</div>
<div class="t" style="left:609.20px;top:434.00px;font-family:'Liberation Mono';font-size:14px;font-weight:normal;color:#000;letter-spacing:-0.400px">0.00</div>
<div class="t" style="left:664.50px;top:433.00px;font-family:'Liberation Sans';font-size:12px;font-weight:normal;color:#000;letter-spacing:0.625px">Ex1:0.8<span class="a">*</span>1.5<span class="a">*</span>(Lf1+Lf2)+1.5<span class="a">*</span>Lf3</div>
<svg class="r" style="left:61px;top:448px;" width="22" height="16" viewBox="0 0 22 16"><g shape-rendering="crispEdges" fill="#ff0000"><rect x="11" y="0" width="1" height="15"/><rect x="6" y="6" width="15" height="1"/></g><path d="M9 10 L14 10 L11.5 13.6 Z" fill="#f00"/><path d="M16 3.8 L21 6.5 L16 9.2 Z" fill="#f00"/><path d="M7.6 1.2 A5.6 6.4 0 0 0 6.6 12.2" stroke="#f00" stroke-width="1.15" fill="none"/><path d="M5.6 1.2 L9.6 -0.2 L8.6 3.8 Z" fill="#f00"/></svg>
<div class="t" style="left:86.00px;top:451.00px;font-family:'Liberation Sans';font-size:12px;font-weight:normal;color:#000;letter-spacing:0.667px">max APt</div>
<div class="t" style="left:317.20px;top:450.00px;font-family:'Liberation Mono';font-size:14px;font-weight:normal;color:#000;letter-spacing:-0.400px">0.03</div>
<div class="t" style="left:369.60px;top:450.00px;font-family:'Liberation Mono';font-size:14px;font-weight:normal;color:#000;letter-spacing:-0.400px"><span class="d">–</span>2.43</div>
<div class="t" style="left:454.20px;top:450.00px;font-family:'Liberation Mono';font-size:14px;font-weight:normal;color:#000;letter-spacing:-0.400px">4.59</div>
<div class="t" style="left:505.20px;top:450.00px;font-family:'Liberation Mono';font-size:14px;font-weight:normal;color:#000;letter-spacing:-0.400px">0.00</div>
<div class="t" style="left:557.20px;top:450.00px;font-family:'Liberation Mono';font-size:14px;font-weight:normal;color:#000;letter-spacing:-0.400px">0.00</div>
<div class="t" style="left:609.20px;top:450.00px;font-family:'Liberation Mono';font-size:14px;font-weight:normal;color:#000;letter-spacing:-0.400px">0.00</div>
<div class="t" style="left:664.50px;top:449.00px;font-family:'Liberation Sans';font-size:12px;font-weight:normal;color:#000;letter-spacing:0.350px">Ex1:1.5<span class="a">*</span>Lf5</div>
<svg class="r" style="left:18px;top:470px;" width="10" height="10" viewBox="0 0 10 10"><g shape-rendering="crispEdges"><rect x="0" y="0" width="10" height="10" fill="#000"/><rect x="1" y="1" width="8" height="8" fill="#fff"/><rect x="2" y="4" width="6" height="2" fill="#000"/><rect x="4" y="2" width="2" height="6" fill="#000"/></g></svg>
<div class="t" style="left:34.00px;top:469.00px;font-family:'Liberation Sans';font-size:12px;font-weight:bold;color:#000;letter-spacing:0.073px">Nachweis 3: EC 5 Tragfähigkeit (Th.I.Ord.)</div>
<div class="r" style="left:11px;top:487px;width:877px;height:16px;background:#0080ff;"></div>
<svg class="r" style="left:18px;top:491px;" width="10" height="10" viewBox="0 0 10 10"><g shape-rendering="crispEdges"><rect x="0" y="0" width="10" height="10" fill="#000"/><rect x="1" y="1" width="8" height="8" fill="#fff"/><rect x="2" y="4" width="6" height="2" fill="#000"/><rect x="4" y="2" width="2" height="6" fill="#000"/></g></svg>
<div class="t" style="left:36.00px;top:490.00px;font-family:'Liberation Sans';font-size:12px;font-weight:bold;color:#fff;letter-spacing:0.089px">Punkt 2 bei x = 0.00 m, y = 3.24 m, z = 0.00 m</div>
<svg class="r" style="left:324px;top:489px;" width="18" height="12" viewBox="0 0 18 12"><g shape-rendering="crispEdges"><rect width="18" height="12" fill="#000"/><rect x="3" y="1" width="3" height="2" fill="#ffff00"/><rect x="9" y="1" width="3" height="2" fill="#ffff00"/><rect x="15" y="1" width="2" height="2" fill="#ffff00"/><rect x="1" y="3" width="2" height="3" fill="#ffff00"/><rect x="6" y="3" width="3" height="3" fill="#ffff00"/><rect x="12" y="3" width="3" height="3" fill="#ffff00"/><rect x="3" y="6" width="3" height="3" fill="#ffff00"/><rect x="9" y="6" width="3" height="3" fill="#ffff00"/><rect x="15" y="6" width="2" height="3" fill="#ffff00"/><rect x="1" y="9" width="2" height="2" fill="#ffff00"/><rect x="6" y="9" width="3" height="2" fill="#ffff00"/><rect x="12" y="9" width="3" height="2" fill="#ffff00"/></g></svg>
<div class="t" style="left:347.00px;top:490.00px;font-family:'Liberation Sans';font-size:12px;font-weight:normal;color:#ffffff;letter-spacing:0.750px">Lager C/6.3</div>
<div class="r" style="left:11px;top:508px;width:877px;height:16px;background:#0080ff;"></div>
<svg class="r" style="left:18px;top:512px;" width="10" height="10" viewBox="0 0 10 10"><g shape-rendering="crispEdges"><rect x="0" y="0" width="10" height="10" fill="#000"/><rect x="1" y="1" width="8" height="8" fill="#fff"/><rect x="2" y="4" width="6" height="2" fill="#000"/><rect x="4" y="2" width="2" height="6" fill="#000"/></g></svg>
<div class="t" style="left:36.00px;top:511.00px;font-family:'Liberation Sans';font-size:12px;font-weight:bold;color:#fff;letter-spacing:0.000px">Punkt 10 bei x = 10.34 m, y = 3.24 m, z = 0.00 m</div>
<svg class="r" style="left:324px;top:510px;" width="18" height="12" viewBox="0 0 18 12"><g shape-rendering="crispEdges"><rect width="18" height="12" fill="#000"/><rect x="3" y="1" width="3" height="2" fill="#ffff00"/><rect x="9" y="1" width="3" height="2" fill="#ffff00"/><rect x="15" y="1" width="2" height="2" fill="#ffff00"/><rect x="1" y="3" width="2" height="3" fill="#ffff00"/><rect x="6" y="3" width="3" height="3" fill="#ffff00"/><rect x="12" y="3" width="3" height="3" fill="#ffff00"/><rect x="3" y="6" width="3" height="3" fill="#ffff00"/><rect x="9" y="6" width="3" height="3" fill="#ffff00"/><rect x="15" y="6" width="2" height="3" fill="#ffff00"/><rect x="1" y="9" width="2" height="2" fill="#ffff00"/><rect x="6" y="9" width="3" height="2" fill="#ffff00"/><rect x="12" y="9" width="3" height="2" fill="#ffff00"/></g></svg>
<div class="t" style="left:347.00px;top:511.00px;font-family:'Liberation Sans';font-size:12px;font-weight:normal;color:#ffffff;letter-spacing:0.750px">Lager C/6.2</div>
<div class="r" style="left:11px;top:529px;width:877px;height:16px;background:#0080ff;"></div>
<svg class="r" style="left:18px;top:533px;" width="10" height="10" viewBox="0 0 10 10"><g shape-rendering="crispEdges"><rect x="0" y="0" width="10" height="10" fill="#000"/><rect x="1" y="1" width="8" height="8" fill="#fff"/><rect x="2" y="4" width="6" height="2" fill="#000"/><rect x="4" y="2" width="2" height="6" fill="#000"/></g></svg>
<div class="t" style="left:36.00px;top:532.00px;font-family:'Liberation Sans';font-size:12px;font-weight:bold;color:#fff;letter-spacing:-0.021px">Punkt 11 bei x = 10.34 m, y = 6.54 m, z = 0.00 m</div>
<svg class="r" style="left:324px;top:531px;" width="18" height="12" viewBox="0 0 18 12"><g shape-rendering="crispEdges"><rect width="18" height="12" fill="#000"/><rect x="3" y="1" width="3" height="2" fill="#ffff00"/><rect x="9" y="1" width="3" height="2" fill="#ffff00"/><rect x="15" y="1" width="2" height="2" fill="#ffff00"/><rect x="1" y="3" width="2" height="3" fill="#ffff00"/><rect x="6" y="3" width="3" height="3" fill="#ffff00"/><rect x="12" y="3" width="3" height="3" fill="#ffff00"/><rect x="3" y="6" width="3" height="3" fill="#ffff00"/><rect x="9" y="6" width="3" height="3" fill="#ffff00"/><rect x="15" y="6" width="2" height="3" fill="#ffff00"/><rect x="1" y="9" width="2" height="2" fill="#ffff00"/><rect x="6" y="9" width="3" height="2" fill="#ffff00"/><rect x="12" y="9" width="3" height="2" fill="#ffff00"/></g></svg>
<div class="t" style="left:347.00px;top:532.00px;font-family:'Liberation Sans';font-size:12px;font-weight:normal;color:#ffffff;letter-spacing:0.750px">Lager C/6.1</div>
<svg class="r" style="left:19px;top:34px;" width="30" height="30" viewBox="0 0 30 30"><defs><radialGradient id="g1" cx="15" cy="15" r="14" gradientUnits="userSpaceOnUse"><stop offset="0" stop-color="#ffffff"/><stop offset="0.28" stop-color="#f8f09c"/><stop offset="0.6" stop-color="#e8da30"/><stop offset="0.86" stop-color="#d2c214"/><stop offset="1" stop-color="#948818"/></radialGradient></defs><circle cx="15" cy="15" r="13.8" fill="url(#g1)"/><text x="4.6" y="22.2" font-family="Liberation Serif" font-size="20.5" fill="#141420" stroke="#141420" stroke-width="0.25">Σ</text><text x="17.4" y="21.2" font-family="Liberation Serif" font-size="17.5" fill="#141420" stroke="#141420" stroke-width="0.3">§</text></svg>
<svg class="r" style="left:54px;top:34px;" width="30" height="30" viewBox="0 0 30 30"><defs><radialGradient id="g2" cx="15" cy="15" r="14" gradientUnits="userSpaceOnUse"><stop offset="0" stop-color="#ffffff"/><stop offset="0.28" stop-color="#f8f09c"/><stop offset="0.6" stop-color="#e8da30"/><stop offset="0.86" stop-color="#d2c214"/><stop offset="1" stop-color="#948818"/></radialGradient></defs><circle cx="15" cy="15" r="13.8" fill="url(#g2)"/><line x1="22.00" y1="15.00" x2="28.60" y2="15.00" stroke="#0c8c14" stroke-width="2.2"/><line x1="20.37" y1="20.37" x2="25.04" y2="25.04" stroke="#0c8c14" stroke-width="2.2"/><line x1="15.00" y1="22.00" x2="15.00" y2="28.60" stroke="#0c8c14" stroke-width="2.2"/><line x1="9.63" y1="20.37" x2="4.96" y2="25.04" stroke="#0c8c14" stroke-width="2.2"/><line x1="8.00" y1="15.00" x2="1.40" y2="15.00" stroke="#0c8c14" stroke-width="2.2"/><line x1="9.63" y1="9.63" x2="4.96" y2="4.96" stroke="#0c8c14" stroke-width="2.2"/><line x1="15.00" y1="8.00" x2="15.00" y2="1.40" stroke="#0c8c14" stroke-width="2.2"/><line x1="20.37" y1="9.63" x2="25.04" y2="4.96" stroke="#0c8c14" stroke-width="2.2"/></svg>
<svg class="r" style="left:89px;top:34px;" width="30" height="30" viewBox="0 0 30 30"><defs><radialGradient id="g3" cx="15" cy="15" r="14" gradientUnits="userSpaceOnUse"><stop offset="0" stop-color="#ffffff"/><stop offset="0.28" stop-color="#f8f09c"/><stop offset="0.6" stop-color="#e8da30"/><stop offset="0.86" stop-color="#d2c214"/><stop offset="1" stop-color="#948818"/></radialGradient></defs><circle cx="15" cy="15" r="13.8" fill="url(#g3)"/><g fill="#000"><rect x="5" y="2.6" width="20" height="1.3"/><rect x="5" y="10.8" width="20" height="1.3"/><rect x="5" y="14.8" width="20" height="1.3"/><rect x="5" y="23" width="20" height="1.3"/></g><g transform="scale(1)"><rect x="9" y="6" width="1" height="1" fill="#0a9a10"/><rect x="12" y="6" width="1" height="1" fill="#0a9a10"/><rect x="10" y="7" width="1" height="1" fill="#0a9a10"/><rect x="11" y="7" width="1" height="1" fill="#0a9a10"/><rect x="10" y="8" width="1" height="1" fill="#0a9a10"/><rect x="11" y="8" width="1" height="1" fill="#0a9a10"/><rect x="9" y="9" width="1" height="1" fill="#0a9a10"/><rect x="12" y="9" width="1" height="1" fill="#0a9a10"/><rect x="14" y="6" width="1" height="1" fill="#0a9a10"/><rect x="17" y="6" width="1" height="1" fill="#0a9a10"/><rect x="15" y="7" width="1" height="1" fill="#0a9a10"/><rect x="16" y="7" width="1" height="1" fill="#0a9a10"/><rect x="15" y="8" width="1" height="1" fill="#0a9a10"/><rect x="16" y="8" width="1" height="1" fill="#0a9a10"/><rect x="14" y="9" width="1" height="1" fill="#0a9a10"/><rect x="17" y="9" width="1" height="1" fill="#0a9a10"/><rect x="19" y="6" width="1" height="1" fill="#0a9a10"/><rect x="22" y="6" width="1" height="1" fill="#0a9a10"/><rect x="20" y="7" width="1" height="1" fill="#0a9a10"/><rect x="21" y="7" width="1" height="1" fill="#0a9a10"/><rect x="20" y="8" width="1" height="1" fill="#0a9a10"/><rect x="21" y="8" width="1" height="1" fill="#0a9a10"/><rect x="19" y="9" width="1" height="1" fill="#0a9a10"/><rect x="22" y="9" width="1" height="1" fill="#0a9a10"/><rect x="9" y="18" width="1" height="1" fill="#0a9a10"/><rect x="12" y="18" width="1" height="1" fill="#0a9a10"/><rect x="10" y="19" width="1" height="1" fill="#0a9a10"/><rect x="11" y="19" width="1" height="1" fill="#0a9a10"/><rect x="10" y="20" width="1" height="1" fill="#0a9a10"/><rect x="11" y="20" width="1" height="1" fill="#0a9a10"/><rect x="9" y="21" width="1" height="1" fill="#0a9a10"/><rect x="12" y="21" width="1" height="1" fill="#0a9a10"/><rect x="14" y="18" width="1" height="1" fill="#0a9a10"/><rect x="17" y="18" width="1" height="1" fill="#0a9a10"/><rect x="15" y="19" width="1" height="1" fill="#0a9a10"/><rect x="16" y="19" width="1" height="1" fill="#0a9a10"/><rect x="15" y="20" width="1" height="1" fill="#0a9a10"/><rect x="16" y="20" width="1" height="1" fill="#0a9a10"/><rect x="14" y="21" width="1" height="1" fill="#0a9a10"/><rect x="17" y="21" width="1" height="1" fill="#0a9a10"/></g></svg>
<svg class="r" style="left:807px;top:34px;" width="30" height="30" viewBox="0 0 30 30"><defs><linearGradient id="b1l" x1="0" y1="0" x2="0" y2="1"><stop offset="0" stop-color="#e8646c"/><stop offset="0.47" stop-color="#f0a0a4"/><stop offset="0.6" stop-color="#e0303a"/><stop offset="1" stop-color="#e0303a"/></linearGradient><radialGradient id="b1r" cx="15" cy="15.5" r="13.5" gradientUnits="userSpaceOnUse"><stop offset="0" stop-color="#fff" stop-opacity="0.8"/><stop offset="0.35" stop-color="#fff" stop-opacity="0.35"/><stop offset="0.75" stop-color="#fff" stop-opacity="0"/><stop offset="0.9" stop-color="#a01018" stop-opacity="0.15"/><stop offset="1" stop-color="#a01018" stop-opacity="0.7"/></radialGradient></defs><circle cx="15" cy="14.6" r="13.5" fill="url(#b1l)"/><circle cx="15" cy="14.6" r="13.5" fill="url(#b1r)"/><path d="M10.3 9.3 L21.6 21.4" stroke="#222" stroke-width="2.6" stroke-linecap="round"/><path d="M22 8.2 L11.2 20.6" stroke="#222" stroke-width="2.3" stroke-linecap="round"/></svg>
<svg class="r" style="left:839px;top:34px;" width="30" height="30" viewBox="0 0 30 30"><defs><linearGradient id="b2l" x1="0" y1="0" x2="0" y2="1"><stop offset="0" stop-color="#4aa4e4"/><stop offset="0.47" stop-color="#90ccf0"/><stop offset="0.6" stop-color="#2a90dc"/><stop offset="1" stop-color="#2a90dc"/></linearGradient><radialGradient id="b2r" cx="15" cy="15.5" r="13.5" gradientUnits="userSpaceOnUse"><stop offset="0" stop-color="#fff" stop-opacity="0.8"/><stop offset="0.35" stop-color="#fff" stop-opacity="0.35"/><stop offset="0.75" stop-color="#fff" stop-opacity="0"/><stop offset="0.9" stop-color="#0c5498" stop-opacity="0.15"/><stop offset="1" stop-color="#0c5498" stop-opacity="0.7"/></radialGradient></defs><circle cx="15" cy="14.6" r="13.5" fill="url(#b2l)"/><circle cx="15" cy="14.6" r="13.5" fill="url(#b2r)"/><path d="M12.6 12.0 C12.6 6.6 19.6 6.4 19.6 11.6 C19.6 14.6 16.4 15.2 16.2 18.4" stroke="#231f20" stroke-width="3.3" fill="none"/><circle cx="16.2" cy="22.5" r="2.1" fill="#231f20"/></svg>
<svg class="r" style="left:871px;top:34px;" width="30" height="30" viewBox="0 0 30 30"><defs><linearGradient id="b3l" x1="0" y1="0" x2="0" y2="1"><stop offset="0" stop-color="#40b066"/><stop offset="0.47" stop-color="#98d8a8"/><stop offset="0.6" stop-color="#20a050"/><stop offset="1" stop-color="#20a050"/></linearGradient><radialGradient id="b3r" cx="15" cy="15.5" r="13.5" gradientUnits="userSpaceOnUse"><stop offset="0" stop-color="#fff" stop-opacity="0.8"/><stop offset="0.35" stop-color="#fff" stop-opacity="0.35"/><stop offset="0.75" stop-color="#fff" stop-opacity="0"/><stop offset="0.9" stop-color="#086028" stop-opacity="0.15"/><stop offset="1" stop-color="#086028" stop-opacity="0.7"/></radialGradient></defs><circle cx="15" cy="14.6" r="13.5" fill="url(#b3l)"/><circle cx="15" cy="14.6" r="13.5" fill="url(#b3r)"/><path d="M8 15.4 L10.4 14.1 L14.3 19.4 L23 5.9 L15.4 23.8 L14 23.9 Z" fill="#231f20"/></svg>
<svg class="r" style="left:108px;top:48px;" width="14" height="20" viewBox="0 0 14 20"><path d="M0.5 0.5 L0.5 14.5 L3.5 11.5 L7 18.5 L9.5 17.5 L6.5 10.5 L10.5 10.5 Z" fill="#ff0000" stroke="#000" stroke-width="1" stroke-linejoin="miter"/></svg>
<svg class="r" style="left:733px;top:223px;" width="14" height="20" viewBox="0 0 14 20"><path d="M0.5 0.5 L0.5 13.5 L3.5 10.5 L7 17.3 L9.2 16.5 L6 9.5 L10.5 9.5 Z" fill="#ff0000" stroke="#000" stroke-width="1" stroke-linejoin="miter"/></svg>
</body></html>
